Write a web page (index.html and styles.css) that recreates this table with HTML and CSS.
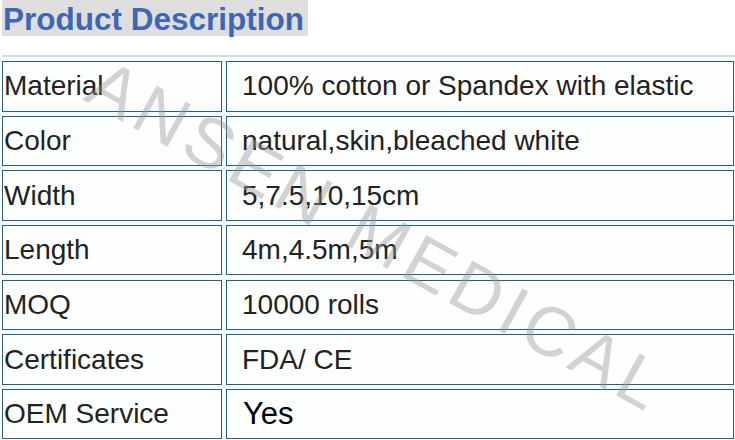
FILE: index.html
```html
<!DOCTYPE html>
<html>
<head>
<meta charset="utf-8">
<link rel="stylesheet" href="styles.css">
</head>
<body>
<div class="page">
  <h1 class="title">Product Description</h1>
  <div class="rule"></div>
  <div class="specs">
    <div class="cell key">Material</div>
    <div class="cell val">100% cotton or Spandex with elastic</div>
    <div class="cell key">Color</div>
    <div class="cell val">natural,skin,bleached white</div>
    <div class="cell key">Width</div>
    <div class="cell val">5,7.5,10,15cm</div>
    <div class="cell key">Length</div>
    <div class="cell val">4m,4.5m,5m</div>
    <div class="cell key">MOQ</div>
    <div class="cell val">10000 rolls</div>
    <div class="cell key">Certificates</div>
    <div class="cell val">FDA/ CE</div>
    <div class="cell key">OEM Service</div>
    <div class="cell val yes">Yes</div>
  </div>
  <div class="watermark">ANSEN MEDICAL</div>
</div>
</body>
</html>
```
FILE: styles.css
```css
html, body {
  margin: 0;
  padding: 0;
  background: #ffffff;
}
.page {
  position: relative;
  width: 735px;
  height: 440px;
  overflow: hidden;
  font-family: "Liberation Sans", Arial, sans-serif;
}
.title {
  display: inline-block;
  margin: 0 0 0 2px;
  padding: 0 4px 0 1px;
  height: 36px;
  line-height: 38px;
  background: #dedede;
  color: #3d67b5;
  font-size: 31.5px;
  font-weight: bold;
}
.rule {
  margin: 19px 0 0 2px;
  height: 2px;
  background: #dadada;
}
.specs {
  display: grid;
  grid-template-columns: 220px 508px;
  grid-auto-rows: 50.5px;
  column-gap: 4px;
  row-gap: 4.17px;
  margin: 4px 0 0 2px;
  background: #f4fafb;
}
.cell {
  box-sizing: border-box;
  border: 1px solid #2a5e7e;
  background: #fdfefe;
  display: flex;
  align-items: center;
  color: #222222;
  font-size: 28px;
  white-space: nowrap;
}
.key {
  padding-left: 1px;
}
.val {
  padding-left: 15px;
}
.yes {
  color: #000000;
  font-size: 31px;
  padding-left: 16px;
}
.watermark {
  position: absolute;
  left: 378px;
  top: 236px;
  transform: translate(-50%, -50%) rotate(29deg);
  font-size: 70px;
  letter-spacing: 6px;
  color: rgba(150, 150, 150, 0.42);
  white-space: nowrap;
  pointer-events: none;
}
```
